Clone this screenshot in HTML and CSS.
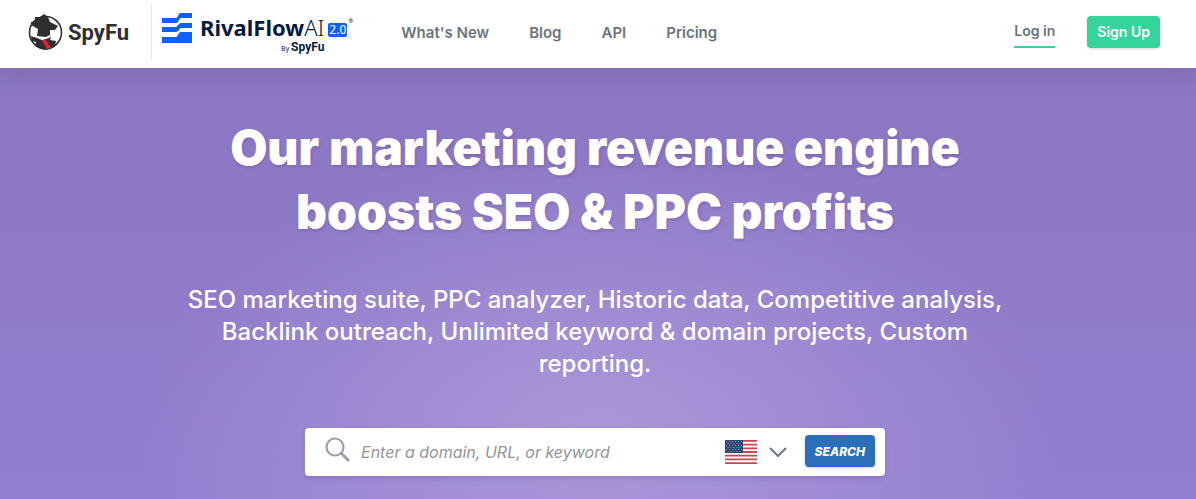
FILE: index.html
```html
<!DOCTYPE html>
<html lang="en">
<head>
    <meta charset="UTF-8">
    <meta name="viewport" content="width=device-width, initial-scale=1.0">
    <title>SpyFu</title>
    <link rel="stylesheet" href="styles.css">
</head>

<body>
    <!-- header -->
    <header class="header">
        <a class="logo" href="#">
            <svg class="logo-icon" viewBox="0 0 36 36" aria-hidden="true">
                <circle cx="17.5" cy="18.5" r="16" fill="#fff" stroke="#2f2e30" stroke-width="1.6"/>
                <path fill="#2f2e30" d="M7 3 L12 3 L16 0 L20 3 L22 8 L30 12 L27 16 L22 16 L22 21 L18 23 L9 22 L10 15 L3 11 L3 8 L7 8 Z"/>
                <path fill="#2f2e30" d="M3 22 L9 24 L14 26 L18 25 L23 23 L22 26 L28 27 L27 32 Q23 36 17 36 Q11 35 7 32 L8 28 L4 27 Z"/>
                <path fill="#e3202b" d="M14 26 L18 26 L23 34 L19 35 Z"/>
            </svg>
            <span class="logo-text">SpyFu</span>
        </a>
        <a class="rival" href="#">
            <svg class="rival-icon" viewBox="0 0 30 30" aria-hidden="true">
                <path fill="#0f5ffb" d="M0 5 H14 Q15 5 16 3 L17 1 Q18 0 19 0 H30 V5 H19 Q18 5 17 7 L16 9 Q15 10 14 10 H0 Z"/>
                <path fill="#0f5ffb" d="M0 14 H14 Q15 14 16 12 L17 11 Q18 10 19 10 H30 V15 H19 Q18 15 17 17 L16 18 Q15 19 14 19 H0 Z"/>
                <path fill="#0f5ffb" d="M0 24 H14 Q15 24 16 22 L17 20 Q18 19 19 19 H30 V30 H0 Z"/>
            </svg>
            <span class="rival-name">
                <span class="rival-top">RivalFlow<span class="rival-ai">AI</span></span>
                <span class="rival-by">By <b>SpyFu</b></span>
            </span>
            <span class="rival-version">2.0</span>
            <span class="rival-mark">®</span>
        </a>
        <nav class="menu">
            <a href="#">What's New</a>
            <a href="#">Blog</a>
            <a href="#">API</a>
            <a href="#">Pricing</a>
        </nav>
        <div class="account">
            <a class="login" href="#">Log in</a>
            <a class="signup" href="#">Sign Up</a>
        </div>
    </header>

    <!-- hero -->
    <main class="hero">
        <h1 class="title">Our marketing revenue engine boosts SEO &amp; PPC profits</h1>
        <p class="subtitle">SEO marketing suite, PPC analyzer, Historic data, Competitive analysis, Backlink outreach, Unlimited keyword &amp; domain projects, Custom reporting.</p>

        <form class="search">
            <label class="search-label" for="query">
                <svg class="search-icon" viewBox="0 0 26 26" aria-hidden="true">
                    <circle cx="10" cy="10" r="8.5" fill="none" stroke="#9b9fae" stroke-width="2.2"/>
                    <path d="M16 16 L24 24" stroke="#9b9fae" stroke-width="3"/>
                </svg>
            </label>
            <input class="search-input" id="query" type="text" placeholder="Enter a domain, URL, or keyword">
            <div class="country">
                <svg class="flag" viewBox="0 0 32 24" aria-hidden="true">
                    <rect width="32" height="24" fill="#fff"/>
                    <path stroke="#c4464e" stroke-width="1.85" d="M0 .92H32M0 4.61H32M0 8.3H32M0 12H32M0 15.69H32M0 19.38H32M0 23.08H32"/>
                    <rect width="18" height="13" fill="#2f4374"/>
                    <path stroke="#8e9abb" stroke-width="1" stroke-dasharray="1 2" d="M1 1.5H17M1 5.5H17M1 9.5H17M2.5 3.5H17M2.5 7.5H17M2.5 11.5H17"/>
                </svg>
                <svg class="arrow" viewBox="0 0 18 10" aria-hidden="true">
                    <path fill="none" stroke="#65748a" stroke-width="2" d="M1 1 L9 9 L17 1"/>
                </svg>
                <select class="country-select" aria-label="Country">
                    <option>US</option>
                </select>
            </div>
            <button class="search-button" type="submit">SEARCH</button>
        </form>
    </main>
</body>
</html>
```

FILE: styles.css
```css
* {
    box-sizing: border-box;
}

body {
    margin: 0;
    min-height: 100vh;
    display: flex;
    flex-direction: column;
    font-family: Inter, "Liberation Sans", sans-serif;
}

a {
    color: inherit;
    text-decoration: none;
}

/* header */
.header {
    position: relative;
    display: flex;
    align-items: center;
    height: 68px;
    padding: 0 36px 4px 28px;
    background-color: #fff;
    box-shadow: 0 4px 20px rgba(60, 60, 60, 0.2);
}

.logo {
    display: flex;
    align-items: center;
    gap: 4px;
    color: #2f2e30;
}

.logo-icon {
    width: 36px;
    height: 36px;
}

.logo-text {
    font-family: Roboto, sans-serif;
    font-size: 22px;
    font-weight: 700;
}

.rival {
    display: flex;
    align-items: flex-start;
    height: 56px;
    margin-left: 22px;
    padding: 9px 0 0 10px;
    border-left: 1px solid #e2e4e8;
    color: #051a40;
    font-family: "Noto Sans", sans-serif;
}

.rival-icon {
    width: 30px;
    height: 30px;
    margin-right: 8px;
}

.rival-name {
    display: flex;
    flex-direction: column;
    align-items: flex-end;
}

.rival-top {
    font-size: 22px;
    font-weight: 700;
    line-height: 28px;
}

.rival-ai {
    font-weight: 300;
}

.rival-by {
    font-size: 7px;
    line-height: 12px;
}

.rival-by b {
    font-family: Roboto, sans-serif;
    font-size: 12px;
    line-height: 12px;
}

.rival-version {
    margin: 10px 0 0 4px;
    padding: 0 1px;
    border-radius: 2px;
    background-color: #0f5ffb;
    color: #fff;
    font-size: 12px;
    line-height: 14px;
}

.rival-mark {
    margin-left: 1px;
    font-size: 6px;
    line-height: 16px;
}

.menu {
    display: flex;
    gap: 40px;
    margin-left: 48px;
    color: #6b747d;
    font-size: 15px;
    font-weight: 600;
}

.account {
    display: flex;
    align-items: center;
    gap: 32px;
    margin-left: auto;
    font-size: 14px;
    font-weight: 600;
    line-height: 32px;
}

.login {
    border-bottom: 2px solid #35d29a;
    color: #6b747d;
    line-height: 30px;
}

.signup {
    padding: 0 10px;
    border-radius: 4px;
    background-color: #35d49a;
    box-shadow: 0 1px 3px rgba(0, 0, 0, 0.15);
    color: #fff;
}

/* hero */
.hero {
    flex: 1;
    display: flex;
    flex-direction: column;
    align-items: center;
    padding: 48px 26px 23px 20px;
    background: radial-gradient(ellipse 460px 290px at 50% 86%, #ab98d8 0, rgba(165, 145, 215, 0) 100%), linear-gradient(#8b76c2, #937fd1);
    color: #fff;
    text-align: center;
}

.title {
    max-width: 768px;
    margin: 0;
    font-size: 48px;
    font-weight: 900;
    line-height: 64px;
    text-shadow: 1px 2px 3px rgba(60, 40, 110, 0.2);
}

.subtitle {
    max-width: 830px;
    margin: 40px 0 48px;
    font-size: 24px;
    font-weight: 500;
    line-height: 32px;
}

/* search box */
.search {
    display: flex;
    align-items: center;
    width: 100%;
    max-width: 580px;
    height: 48px;
    padding: 0 10px 0 20px;
    border-radius: 4px;
    background-color: #fff;
    box-shadow: 0 2px 5px rgba(60, 40, 110, 0.2);
}

.search-label {
    padding-bottom: 4px;
}

.search-icon {
    display: block;
    width: 26px;
    height: 26px;
}

.search-input {
    flex: 1;
    min-width: 0;
    height: 48px;
    padding: 0 10px;
    border: 0;
    background: none;
    font-family: inherit;
    font-size: 16px;
}

.search-input::placeholder {
    color: #929497;
    font-style: italic;
}

.country {
    position: relative;
    display: flex;
    align-items: center;
    gap: 12px;
    margin-right: 18px;
}

.flag {
    width: 32px;
    height: 24px;
}

.arrow {
    width: 18px;
    height: 10px;
}

/* the select lies over the flag and arrow */
.country-select {
    position: absolute;
    inset: 0;
    width: 100%;
    opacity: 0;
}

.search-button {
    height: 32px;
    margin-bottom: 2px;
    padding: 0 10px;
    border: 0;
    border-radius: 4px;
    background-color: #2b6fb9;
    box-shadow: 0 1px 3px rgba(0, 0, 0, 0.2);
    color: #fff;
    font-family: inherit;
    font-size: 12px;
    font-style: italic;
    font-weight: 800;
}
```
